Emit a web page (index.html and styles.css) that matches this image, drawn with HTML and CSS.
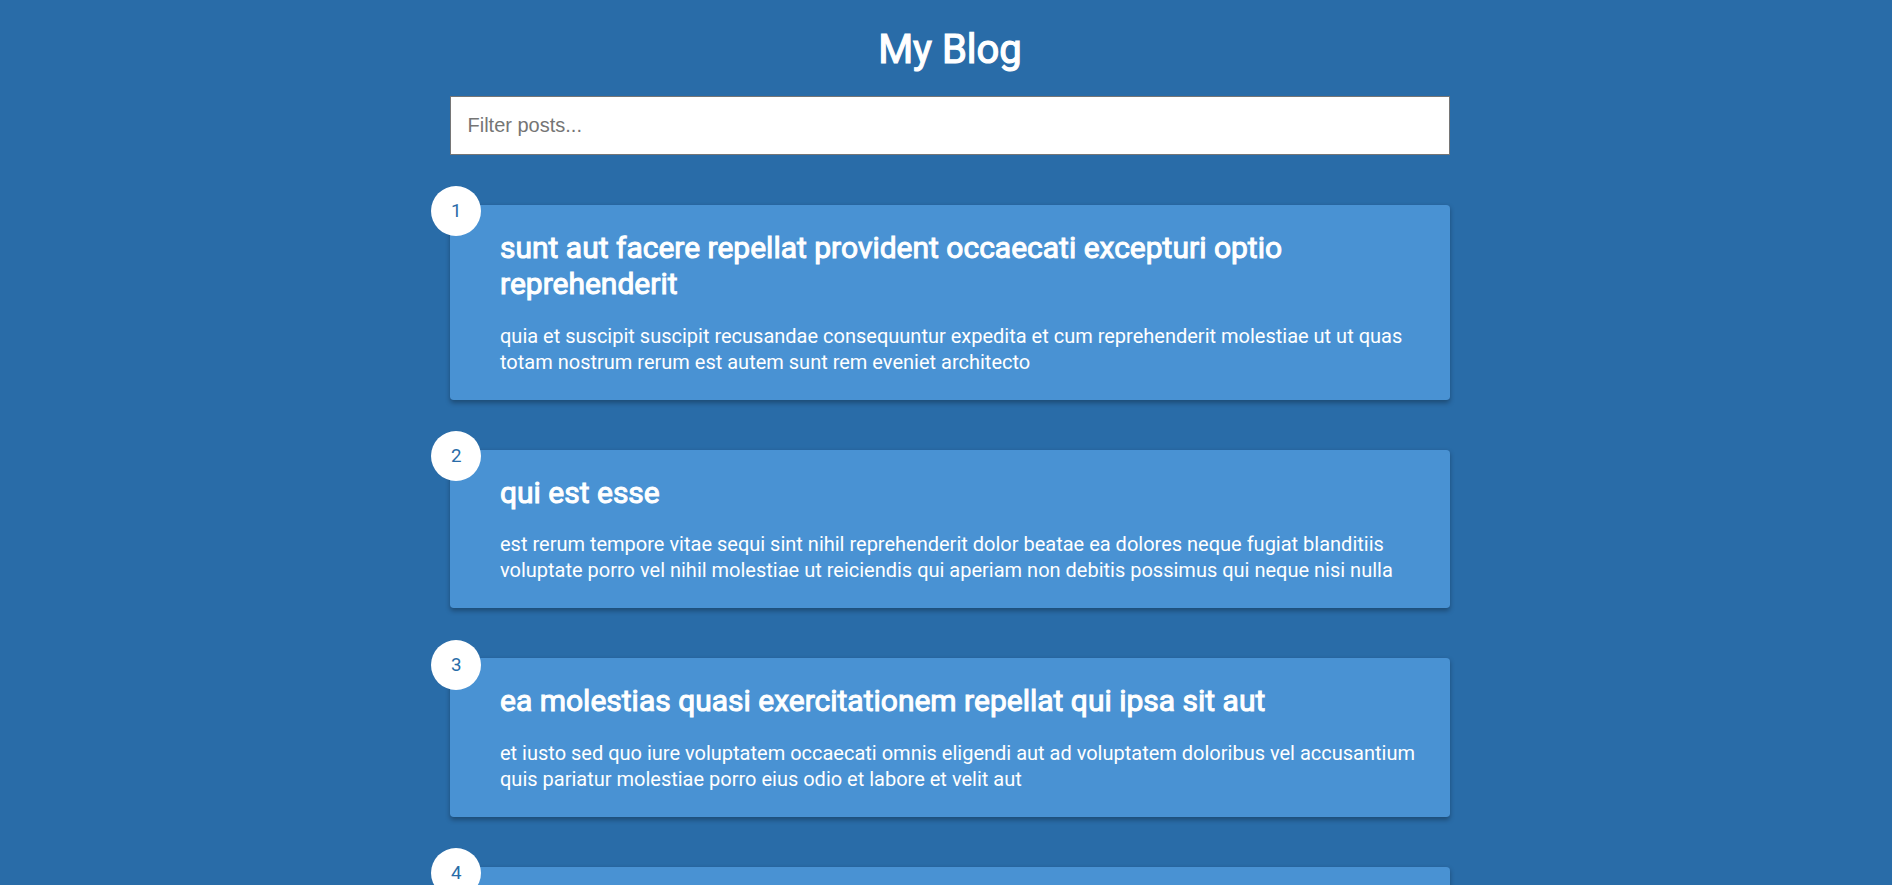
FILE: index.html
```html
<!DOCTYPE html>
<html lang="en">
<head>
<meta charset="UTF-8">
<title>My Blog</title>
<link rel="stylesheet" href="styles.css">
</head>
<body>
  <h1 class="page-title">My Blog</h1>
  <div class="filter-container">
    <input type="text" class="filter" placeholder="Filter posts...">
  </div>
  <div class="posts-container">
    <div class="post">
      <div class="number">1</div>
      <div class="post-info">
        <h2 class="post-title">sunt aut facere repellat provident occaecati excepturi optio reprehenderit</h2>
        <p class="post-body">quia et suscipit suscipit recusandae consequuntur expedita et cum reprehenderit molestiae ut ut quas totam nostrum rerum est autem sunt rem eveniet architecto</p>
      </div>
    </div>
    <div class="post">
      <div class="number">2</div>
      <div class="post-info">
        <h2 class="post-title">qui est esse</h2>
        <p class="post-body">est rerum tempore vitae sequi sint nihil reprehenderit dolor beatae ea dolores neque fugiat blanditiis voluptate porro vel nihil molestiae ut reiciendis qui aperiam non debitis possimus qui neque nisi nulla</p>
      </div>
    </div>
    <div class="post">
      <div class="number">3</div>
      <div class="post-info">
        <h2 class="post-title">ea molestias quasi exercitationem repellat qui ipsa sit aut</h2>
        <p class="post-body">et iusto sed quo iure voluptatem occaecati omnis eligendi aut ad voluptatem doloribus vel accusantium quis pariatur molestiae porro eius odio et labore et velit aut</p>
      </div>
    </div>
    <div class="post">
      <div class="number">4</div>
      <div class="post-info">
        <h2 class="post-title">eum et est occaecati</h2>
        <p class="post-body">ullam et saepe reiciendis voluptatem adipisci sit amet autem assumenda provident rerum culpa quis hic commodi nesciunt rem tenetur doloremque ipsam iure quis sunt voluptatem rerum illo velit</p>
      </div>
    </div>
    <div class="post">
      <div class="number">5</div>
      <div class="post-info">
        <h2 class="post-title">nesciunt quas odio</h2>
        <p class="post-body">repudiandae veniam quaerat sunt sed alias aut fugiat sit autem sed est voluptatem omnis possimus esse voluptatibus quis est aut tenetur dolor neque</p>
      </div>
    </div>
  </div>
</body>
</html>
```
FILE: styles.css
```css
* {
  box-sizing: border-box;
}

body {
  background-color: #296ca8;
  color: #fff;
  font-family: Roboto, "Liberation Sans", sans-serif;
  display: flex;
  flex-direction: column;
  align-items: center;
  min-height: 100vh;
  margin: 0;
  padding: 0 0 125px 8px;
}

.page-title {
  font-size: 40px;
  font-weight: normal;
  -webkit-text-stroke: 1.2px #fff;
  margin: 26px 0 0;
  text-align: center;
}

.filter-container {
  margin-top: 22.5px;
  width: 1000px;
}

.filter {
  display: block;
  width: 100%;
  padding: 17px 16.5px;
  font-family: "Liberation Sans", Arial, sans-serif;
  font-size: 20px;
  color: #000;
  background: #fff;
  border: 1px solid #767676;
  outline: none;
}

.filter::placeholder {
  color: #757575;
}

.posts-container {
  width: 1000px;
}

.post {
  position: relative;
  background-color: #4992d3;
  box-shadow: 0 2.5px 5px rgba(0, 0, 0, 0.3);
  border-radius: 3.75px;
  padding: 25px;
  margin: 50px 0;
  display: flex;
}

.number {
  position: absolute;
  top: -18.75px;
  left: -18.75px;
  font-size: 18.75px;
  width: 50px;
  height: 50px;
  border-radius: 50%;
  background: #fff;
  color: #296ca8;
  display: flex;
  align-items: center;
  justify-content: center;
}

.post-info {
  margin-left: 25px;
}

.post-title {
  margin: 0;
  font-size: 30px;
  font-weight: normal;
  -webkit-text-stroke: 1px #fff;
  line-height: 1.22;
}

.post-body {
  margin: 20px 0 0;
  font-size: 20px;
  line-height: 1.3;
}
```
